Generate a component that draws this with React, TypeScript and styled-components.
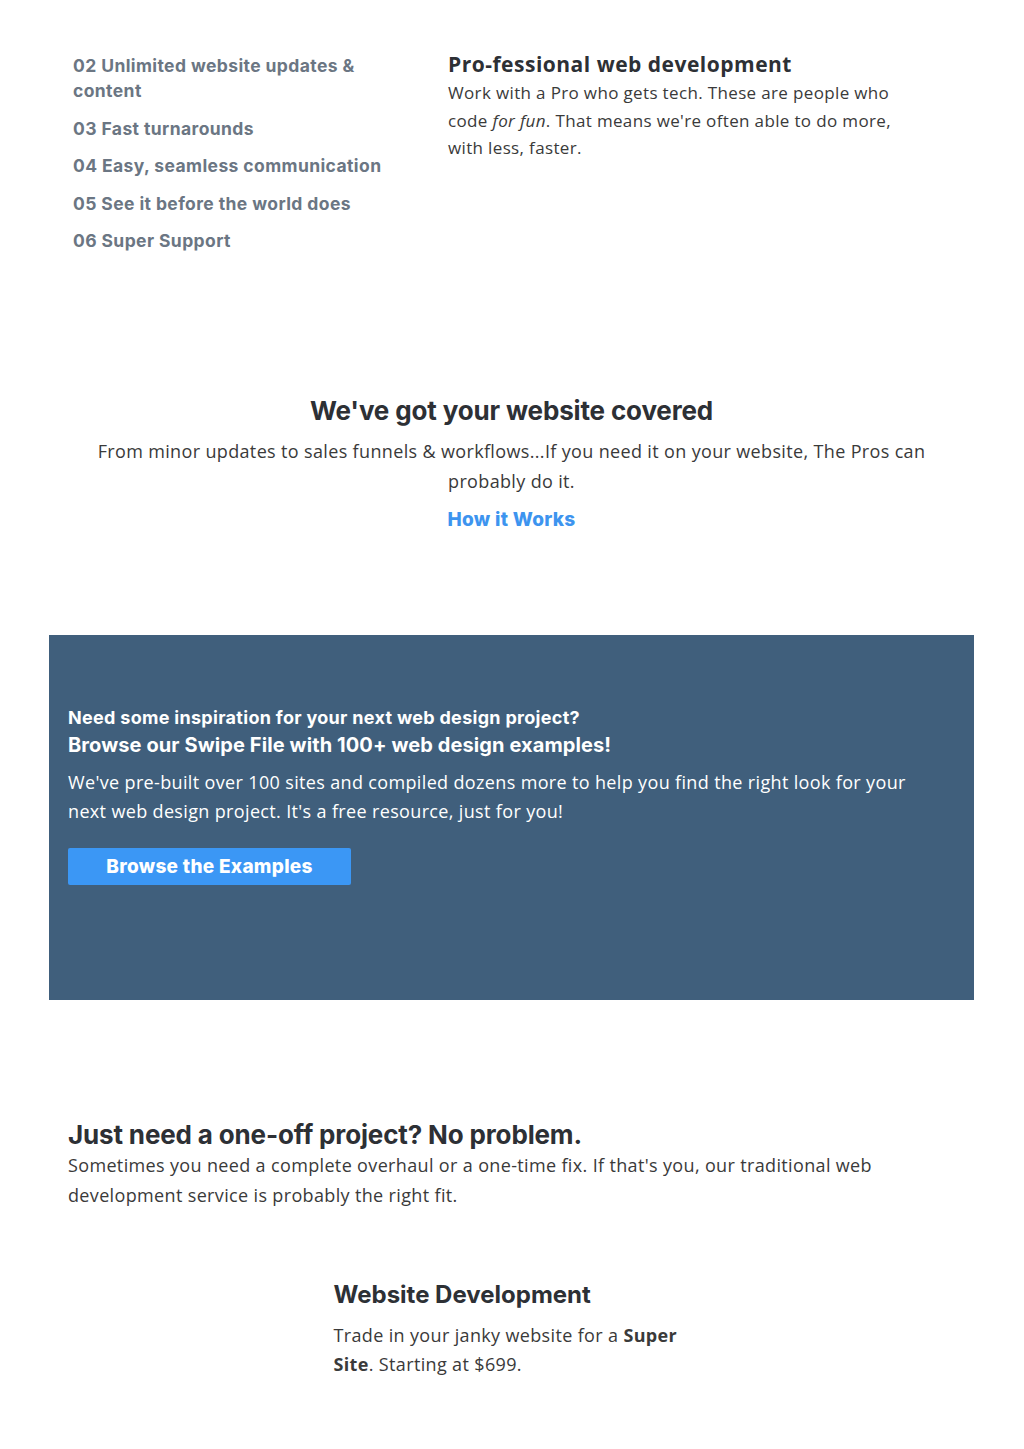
import React from 'react'
import styled, { createGlobalStyle } from 'styled-components'

const GlobalStyle = createGlobalStyle`
  body {
    margin: 0;
    background: #fff;
    font-family: 'Open Sans', 'Liberation Sans', sans-serif;
    color: #3a3a3a;
  }
`

const heading = `'Inter', 'Liberation Sans', sans-serif`

const Page = styled.div`
  width: 925px;
  margin: 0 0 0 49px;
  padding-bottom: 70px;
`

const TopSection = styled.section`
  display: grid;
  grid-template-columns: 375px 1fr;
  padding: 53px 0 0 24px;
`

const FeatureList = styled.ul`
  list-style: none;
  margin: 0;
  padding: 0;
  width: 330px;
`

const FeatureItem = styled.li`
  font-family: ${heading};
  font-weight: 700;
  font-size: 17.5px;
  line-height: 25px;
  letter-spacing: 0.4px;
  color: #6b7683;
  margin-bottom: 12.5px;
`

const ProBlock = styled.div`
  width: 462px;
`

const ProTitle = styled.h3`
  margin: -2px 0 2px;
  font-family: 'Open Sans', sans-serif;
  font-weight: 700;
  font-size: 21px;
  line-height: 26px;
  letter-spacing: 0.5px;
  color: #2d3035;
`

const BodyText = styled.p<{ $size?: number; $lh?: number; $color?: string; $max?: number }>`
  margin: 0;
  font-size: ${(p) => p.$size ?? 17}px;
  line-height: ${(p) => p.$lh ?? 27.5}px;
  letter-spacing: 0.35px;
  color: ${(p) => p.$color ?? '#3a3a3a'};
  max-width: ${(p) => (p.$max ? `${p.$max}px` : 'none')};
`

const Covered = styled.section`
  margin-top: 129px;
  text-align: center;
  padding: 0 30px;
`

const SectionTitle = styled.h2<{ $lh?: number }>`
  margin: 0;
  font-family: ${heading};
  font-weight: 700;
  font-size: 26px;
  line-height: ${(p) => p.$lh ?? 32}px;
  letter-spacing: -0.15px;
  color: #2d3035;
`

const HowLink = styled.a`
  display: inline-block;
  margin-top: 12px;
  font-family: ${heading};
  font-weight: 800;
  font-size: 19px;
  line-height: 24px;
  letter-spacing: 0.3px;
  color: #3d94ef;
  text-decoration: none;
`

const SwipePanel = styled.section`
  margin-top: 103px;
  height: 365px;
  box-sizing: border-box;
  background: #405f7c;
  padding: 70px 19px 0;
  color: #fff;
`

const PanelKicker = styled.div<{ $size: number; $lh: number; $ls: number }>`
  font-family: ${heading};
  font-weight: 700;
  font-size: ${(p) => p.$size}px;
  line-height: ${(p) => p.$lh}px;
  letter-spacing: ${(p) => p.$ls}px;
`

const ExamplesButton = styled.a`
  display: flex;
  align-items: center;
  justify-content: center;
  width: 283px;
  height: 37px;
  margin-top: 22px;
  background: #3b97f5;
  border-radius: 2px;
  color: #fff;
  font-family: ${heading};
  font-weight: 800;
  font-size: 19px;
  letter-spacing: 0.3px;
  text-decoration: none;
`

const OneOff = styled.section`
  margin-top: 120px;
  padding-left: 19px;
`

const ServiceCard = styled.div`
  width: 356px;
  margin: 70px auto 0;
`

const ServiceTitle = styled.h3`
  margin: 0 0 11px;
  font-family: ${heading};
  font-weight: 700;
  font-size: 24px;
  line-height: 30px;
  color: #2d3035;
`

const features = [
  '02 Unlimited website updates & content',
  '03 Fast turnarounds',
  '04 Easy, seamless communication',
  '05 See it before the world does',
  '06 Super Support',
]

export default function App() {
  return (
    <>
      <GlobalStyle />
      <Page>
        <TopSection>
          <FeatureList>
            {features.map((f) => (
              <FeatureItem key={f}>{f}</FeatureItem>
            ))}
          </FeatureList>
          <ProBlock>
            <ProTitle>Pro-fessional web development</ProTitle>
            <BodyText>
              Work with a Pro who gets tech. These are people who code <em>for fun</em>. That
              means we're often able to do more, with less, faster.
            </BodyText>
          </ProBlock>
        </TopSection>

        <Covered>
          <SectionTitle>We've got your website covered</SectionTitle>
          <BodyText $size={18} $lh={30} style={{ marginTop: 9 }}>
            From minor updates to sales funnels &amp; workflows...If you need it on your website,
            The Pros can probably do it.
          </BodyText>
          <HowLink href="#">How it Works</HowLink>
        </Covered>

        <SwipePanel>
          <PanelKicker $size={18} $lh={26} $ls={0.3}>
            Need some inspiration for your next web design project?
          </PanelKicker>
          <PanelKicker $size={20} $lh={28} $ls={0.1}>
            Browse our Swipe File with 100+ web design examples!
          </PanelKicker>
          <BodyText $size={18} $lh={29} $color="#fff" $max={860} style={{ marginTop: 9 }}>
            We've pre-built over 100 sites and compiled dozens more to help you find the right
            look for your next web design project. It's a free resource, just for you!
          </BodyText>
          <ExamplesButton href="#">Browse the Examples</ExamplesButton>
        </SwipePanel>

        <OneOff>
          <SectionTitle $lh={30}>Just need a one-off project? No problem.</SectionTitle>
          <BodyText $size={18} $lh={30} $max={840}>
            Sometimes you need a complete overhaul or a one-time fix. If that's you, our
            traditional web development service is probably the right fit.
          </BodyText>
        </OneOff>

        <ServiceCard>
          <ServiceTitle>Website Development</ServiceTitle>
          <BodyText $size={18} $lh={29}>
            Trade in your janky website for a <strong>Super Site</strong>. Starting at $699.
          </BodyText>
        </ServiceCard>
      </Page>
    </>
  )
}
